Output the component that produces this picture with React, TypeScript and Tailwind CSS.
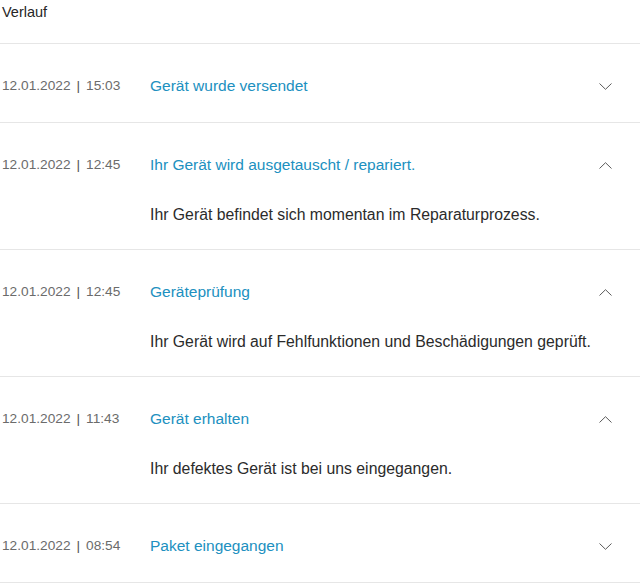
import React, { useState } from "react";

type Entry = {
    date: string;
    time: string;
    title: string;
    text: string;
    open: boolean;
};

const entries: Entry[] = [
    { date: "12.01.2022", time: "15:03", title: "Gerät wurde versendet", text: "Ihr Gerät ist auf dem Weg zu Ihnen.", open: false },
    { date: "12.01.2022", time: "12:45", title: "Ihr Gerät wird ausgetauscht / repariert.", text: "Ihr Gerät befindet sich momentan im Reparaturprozess.", open: true },
    { date: "12.01.2022", time: "12:45", title: "Geräteprüfung", text: "Ihr Gerät wird auf Fehlfunktionen und Beschädigungen geprüft.", open: true },
    { date: "12.01.2022", time: "11:43", title: "Gerät erhalten", text: "Ihr defektes Gerät ist bei uns eingegangen.", open: true },
    { date: "12.01.2022", time: "08:54", title: "Paket eingegangen", text: "Ihr Paket ist bei uns eingegangen.", open: false },
];

const Chevron = ({ up }: { up: boolean }) => (
    <svg width="13" height="7" viewBox="0 0 13 7" fill="none" className="text-[#5a5a5a]">
        {up ? (
            <path d="M0.5 6.5L6.5 0.7L12.5 6.5" stroke="currentColor" strokeWidth="1" />
        ) : (
            <path d="M0.5 0.5L6.5 6.3L12.5 0.5" stroke="currentColor" strokeWidth="1" />
        )}
    </svg>
);

const Row = ({ entry }: { entry: Entry }) => {
    const [open, setOpen] = useState(entry.open);
    return (
        <div className="border-t border-[#e6e6e6]">
            <button
                onClick={() => setOpen(!open)}
                className={`flex w-full items-center text-left pt-[32px] ${open ? "pb-[1px]" : "pb-[26px]"}`}
            >
                <span className="flex w-[150px] shrink-0 pl-[2px] text-[13.7px] leading-5 text-[#6b6b6b]">
                    <span>{entry.date}</span>
                    <span className="mx-[6px] text-[#555]">|</span>
                    <span>{entry.time}</span>
                </span>
                <span className="flex-1 text-[15.5px] leading-5 text-[#2090c0]">{entry.title}</span>
                <span className="mr-[28px] flex h-5 items-center">
                    <Chevron up={open} />
                </span>
            </button>
            {open && (
                <div className="pl-[150px] pt-[29px] pb-[24px] text-[15.8px] leading-5 text-[#2b2b2b]">
                    {entry.text}
                </div>
            )}
        </div>
    );
};

export default function App() {
    return (
        <div className="w-[640px] bg-white font-['Liberation_Sans',Arial,sans-serif]">
            <h2 className="pl-[2px] pt-[2px] pb-[21px] text-[14.5px] leading-5 text-[#262626]">Verlauf</h2>
            <div className="border-b border-[#e6e6e6]">
                {entries.map((e, i) => (
                    <Row key={i} entry={e} />
                ))}
            </div>
        </div>
    );
}
